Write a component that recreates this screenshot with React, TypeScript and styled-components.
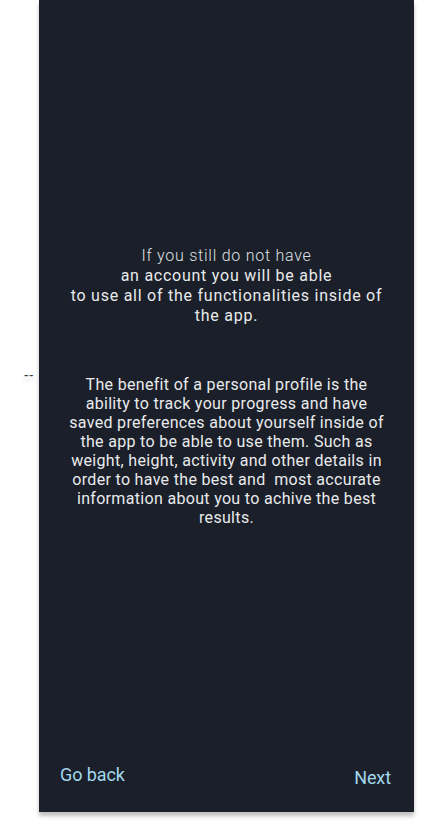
import React from "react";
import styled, { createGlobalStyle } from "styled-components";

const Global = createGlobalStyle`
  html, body {
    margin: 0;
    padding: 0;
    background: #ffffff;
  }
  body {
    font-family: Roboto, "Noto Sans", "Liberation Sans", sans-serif;
  }
`;

const Page = styled.div`
  display: flex;
  flex-direction: row;
  align-items: flex-start;
  width: 446px;
  height: 820px;
`;

const Gutter = styled.div`
  width: 39px;
  flex: none;
  padding-top: 368px;
  box-sizing: border-box;
`;

const Dashes = styled.span`
  display: block;
  padding-left: 24px;
  font-family: Roboto, "Liberation Sans", sans-serif;
  font-size: 13px;
  font-weight: 500;
  line-height: 16px;
  color: #3c3c3c;
  letter-spacing: 0.6px;
  text-shadow: 0 4px 4px rgba(0, 0, 0, 0.25);
`;

const Panel = styled.main`
  width: 375px;
  height: 812px;
  flex: none;
  background: #1a1f29;
  box-shadow: 0 4px 4px rgba(0, 0, 0, 0.25);
  display: flex;
  flex-direction: column;
  box-sizing: border-box;
  padding-top: 246px;
`;

const Intro = styled.p`
  margin: 0 30px;
  font-size: 16px;
  line-height: 20px;
  color: #e9eaec;
  text-align: center;
  letter-spacing: 0.75px;
`;

const LightLine = styled.span`
  font-weight: 300;
  color: #dfe0e3;
`;

const Body = styled.p`
  margin: 49px 30px 0;
  font-size: 16px;
  line-height: 19px;
  color: #e9eaec;
  text-align: center;
  letter-spacing: 0.32px;
`;

const Spacer = styled.div`
  flex: 1;
`;

const Footer = styled.footer`
  display: flex;
  justify-content: space-between;
  align-items: flex-end;
  padding: 0 23px 22px 21px;
`;

const TextButton = styled.button<{ $lift?: number }>`
  background: none;
  border: none;
  padding: 0;
  margin: 0 0 ${(p) => p.$lift ?? 0}px;
  font-family: Roboto, "Liberation Sans", sans-serif;
  font-size: 18px;
  line-height: 24px;
  color: #a3d8ee;
  letter-spacing: -0.1px;
  cursor: pointer;
`;

export default function App() {
  return (
    <>
      <Global />
      <Page>
        <Gutter>
          <Dashes>--</Dashes>
        </Gutter>
        <Panel>
          <Intro>
            <LightLine>If you still do not have</LightLine>
            <br />
            an account you will be able
            <br />
            to use all of the functionalities inside of the app.
          </Intro>
          <Body>
            The benefit of a personal profile is the ability to track your
            progress and have saved preferences about yourself inside of the
            app to be able to use them. Such as weight, height, activity and
            other details in order to have the best and{"\u00a0"} most accurate
            information about you to achive the best results.
          </Body>
          <Spacer />
          <Footer>
            <TextButton $lift={3}>Go back</TextButton>
            <TextButton>Next</TextButton>
          </Footer>
        </Panel>
      </Page>
    </>
  );
}
